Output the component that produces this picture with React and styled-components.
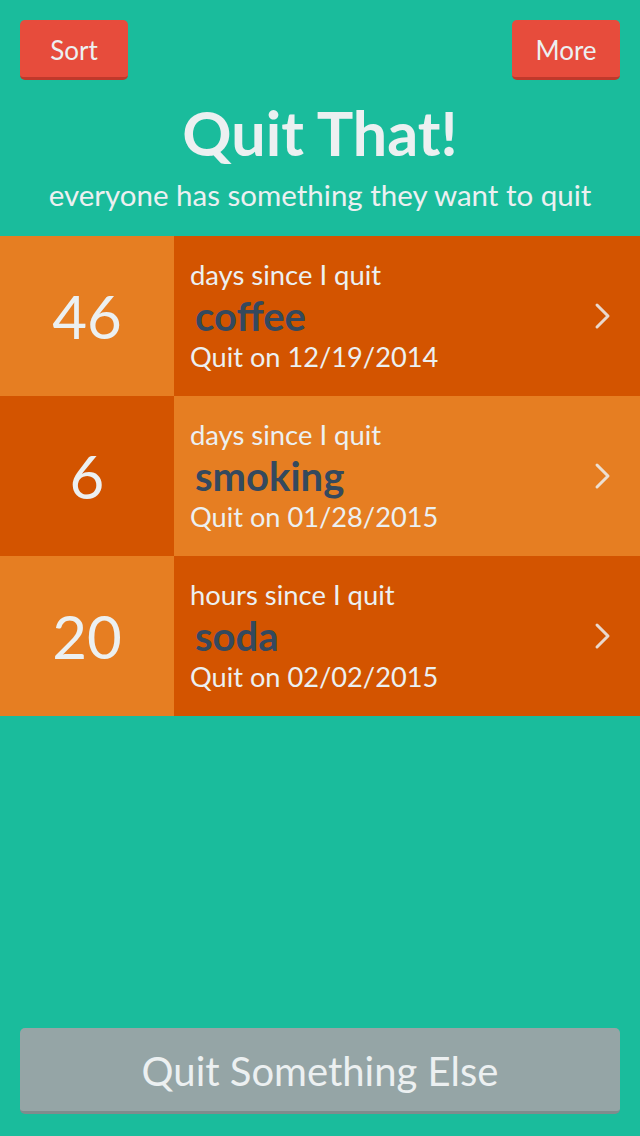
import React from 'react'
import styled, { createGlobalStyle } from 'styled-components'

const GlobalStyle = createGlobalStyle`
  html, body {
    margin: 0;
    padding: 0;
    background: #1abc9c;
  }
  body {
    font-family: Lato, "Open Sans", sans-serif;
    color: #ecf0f1;
  }
`

const Page = styled.div`
  min-height: 100vh;
  display: flex;
  flex-direction: column;
  box-sizing: border-box;
  padding-bottom: 22px;
`

const TopBar = styled.div`
  display: flex;
  justify-content: space-between;
  padding: 20px 20px 0;
`

const SmallButton = styled.button`
  width: 108px;
  height: 60px;
  border: none;
  border-bottom: 3px solid #c0392b;
  border-radius: 5px;
  background: #e74c3c;
  color: #ecf0f1;
  font-family: Lato, sans-serif;
  font-size: 26px;
  padding: 2px 0 0;
  cursor: pointer;
`

const Title = styled.h1`
  margin: 20px 0 0;
  text-align: center;
  font-size: 61px;
  font-weight: 700;
  line-height: 66px;
  color: #ecf0f1;
`

const Subtitle = styled.p`
  margin: 9px 0 0;
  text-align: center;
  font-size: 29.5px;
  line-height: 40px;
  color: #ecf0f1;
`

const List = styled.div`
  margin-top: 21px;
  display: flex;
  flex-direction: column;
`

const Row = styled.div`
  display: flex;
  height: 160px;
  cursor: pointer;
`

const Count = styled.div`
  width: 174px;
  display: flex;
  align-items: center;
  justify-content: center;
  background: ${p => (p.$dark ? '#d35400' : '#e67e22')};
  font-size: 60px;
  color: #ecf0f1;
`

const Detail = styled.div`
  flex: 1;
  display: flex;
  align-items: center;
  padding: 0 28px 0 16px;
  background: ${p => (p.$dark ? '#d35400' : '#e67e22')};
`

const Info = styled.div`
  flex: 1;
  display: flex;
  flex-direction: column;
`

const Since = styled.div`
  font-size: 27.4px;
  line-height: 40px;
`

const Habit = styled.div`
  font-size: 40px;
  font-weight: 700;
  line-height: 42px;
  color: #34495e;
  padding-left: 5px;
`

const QuitDate = styled.div`
  font-size: 27.2px;
  line-height: 40px;
`

const Chevron = () => (
  <svg width="18" height="28" viewBox="0 0 18 28">
    <path d="M3 3 L14 14 L3 25" fill="none" stroke="#ecf0f1" strokeOpacity="0.85" strokeWidth="3" strokeLinecap="round" strokeLinejoin="round" />
  </svg>
)

const Footer = styled.div`
  margin-top: auto;
  padding: 0 20px;
`

const BigButton = styled.button`
  width: 100%;
  height: 86px;
  border: none;
  border-bottom: 3px solid #7f8c8d;
  border-radius: 5px;
  background: #95a5a6;
  color: #ecf0f1;
  font-family: Lato, sans-serif;
  font-size: 40px;
  padding: 3px 0 0;
  cursor: pointer;
`

const quits = [
  { count: 46, unit: 'days', name: 'coffee', date: '12/19/2014' },
  { count: 6, unit: 'days', name: 'smoking', date: '01/28/2015' },
  { count: 20, unit: 'hours', name: 'soda', date: '02/02/2015' },
]

export default function App() {
  return (
    <Page>
      <GlobalStyle />
      <TopBar>
        <SmallButton>Sort</SmallButton>
        <SmallButton>More</SmallButton>
      </TopBar>
      <Title>Quit That!</Title>
      <Subtitle>everyone has something they want to quit</Subtitle>
      <List>
        {quits.map((q, i) => (
          <Row key={q.name}>
            <Count $dark={i % 2 === 1}>{q.count}</Count>
            <Detail $dark={i % 2 === 0}>
              <Info>
                <Since>{q.unit} since I quit</Since>
                <Habit>{q.name}</Habit>
                <QuitDate>Quit on {q.date}</QuitDate>
              </Info>
              <Chevron />
            </Detail>
          </Row>
        ))}
      </List>
      <Footer>
        <BigButton>Quit Something Else</BigButton>
      </Footer>
    </Page>
  )
}
